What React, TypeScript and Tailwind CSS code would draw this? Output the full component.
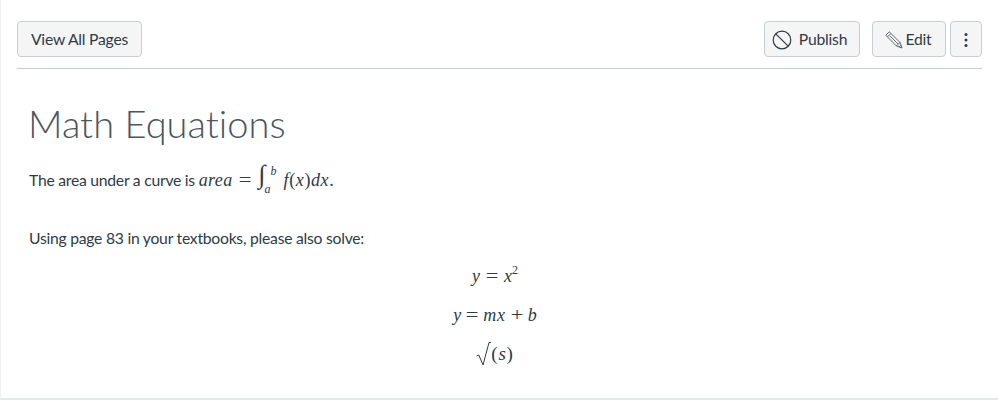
import React from "react";

const btn = "flex items-center justify-center h-[36px] pt-[1px] rounded-[4px] border border-[#c7cdd1] bg-[#f5f5f5] text-[#2d3b45] text-[15.7px] tracking-[-0.22px]";

function Pencil() {
  return (
    <svg width="18" height="18" viewBox="0 0 18 18" fill="none" stroke="#2d3b45" strokeWidth="0.75" strokeLinejoin="round">
      <path d="M0.8 4.2 L4.2 0.8 L15 11.4 L17 17 L11.4 15 Z" />
      <path d="M2.5 5.9 L5.9 2.5 M4.8 4.8 L13 13 M11.4 15 L15 11.4 M14.2 16 L16 14.2" />
    </svg>
  );
}

function Ban() {
  return (
    <svg width="20" height="20" viewBox="0 0 20 20" fill="none" stroke="#2d3b45" strokeWidth="1.2">
      <circle cx="10" cy="10" r="8.8" />
      <path d="M3.8 3.8 L16.2 16.2" />
    </svg>
  );
}

function Kebab() {
  return (
    <svg width="4" height="16" viewBox="0 0 4 16" fill="#2d3b45">
      <circle cx="2" cy="2.5" r="1.5" />
      <circle cx="2" cy="8" r="1.5" />
      <circle cx="2" cy="13.5" r="1.5" />
    </svg>
  );
}

const M = ({ children, className = "" }: { children: React.ReactNode; className?: string }) => (
  <span className={`[font-family:'Liberation_Serif',serif] text-[#2d3b45] ${className}`}>{children}</span>
);

export default function App() {
  return (
    <div className="w-[998px] h-[400px] overflow-hidden bg-white border-l border-[#f0f0f0] [font-family:Lato,sans-serif]">
      <div className="h-[400px] box-border border-b-2 border-[#e6e9ea] pl-[16px] pr-[16px] pt-[21px]">
        <div className="flex justify-between border-b border-[#c7cdd1] pb-[11px]">
          <button className={`${btn} w-[125px]`}>View All Pages</button>
          <div className="flex">
            <button className={`${btn} w-[96px] gap-[7px] pr-[5px] mr-[12px]`}><Ban />Publish</button>
            <button className={`${btn} w-[74px] gap-[2px] pr-[1px] mr-[4px]`}><Pencil />Edit</button>
            <button className={`${btn} w-[32px]`}><Kebab /></button>
          </div>
        </div>
        <div className="pl-[12px] pr-[21px]">
          <h1 className="text-[38px] font-light leading-[46px] text-[#4a5660] mt-[31px] tracking-[0.05px] -ml-[1px]">Math Equations</h1>
          <p className="text-[15.7px] tracking-[-0.24px] leading-[24px] text-[#2d3b45] mt-[22px] flex items-center h-[24px]">
            <span className="whitespace-pre">The area under a curve is </span>
            <M className="italic text-[18px] tracking-[0.4px] whitespace-pre">area</M>
            <M className="text-[18px] ml-[7px] scale-x-125">=</M>
            <span className="relative inline-block w-[25px] h-[24px] ml-[9px]">
              <M className="absolute left-0 -top-[5px] italic text-[26px]">∫</M>
              <M className="absolute left-[12px] -top-[9px] italic text-[12px]">b</M>
              <M className="absolute left-[6px] top-[9px] italic text-[12px]">a</M>
            </span>
            <M className="italic text-[18px] tracking-[0.6px]">f</M>
            <M className="text-[18px] tracking-[0.6px]">(</M>
            <M className="italic text-[18px] tracking-[0.6px]">x</M>
            <M className="text-[18px] tracking-[0.6px]">)</M>
            <M className="italic text-[18px] tracking-[0.6px]">dx</M>
            <M className="text-[18px]">.</M>
          </p>
          <p className="text-[15.7px] tracking-[-0.24px] leading-[24px] text-[#2d3b45] mt-[34px]">Using page 83 in your textbooks, please also solve:</p>
          <div className="flex flex-col items-center mt-[7px] text-[18px]">
            <div className="h-[39px] flex items-center">
              <M className="italic">y</M><M className="mx-[7px] scale-x-125">=</M><M className="italic">x</M>
              <M className="text-[12px] relative -top-[7px]">2</M>
            </div>
            <div className="h-[39px] flex items-center">
              <M className="italic">y</M><M className="mx-[6px] scale-x-125">=</M><M className="italic tracking-[0.7px]">mx</M><M className="mx-[6px] scale-x-125">+</M><M className="italic">b</M>
            </div>
            <div className="h-[39px] flex items-center -mt-[1px]">
              <svg width="15" height="26" viewBox="0 0 15 26" fill="none" stroke="#2d3b45">
                <path d="M0.5 15 L2.8 14 L7 24 L13 1.5 L15 1.5" strokeWidth="1" />
              </svg>
              <span className="leading-[20px] tracking-[0.8px] text-[19px]">
                <M>(</M><M className="italic">s</M><M>)</M>
              </span>
            </div>
          </div>
        </div>
      </div>
    </div>
  );
}
